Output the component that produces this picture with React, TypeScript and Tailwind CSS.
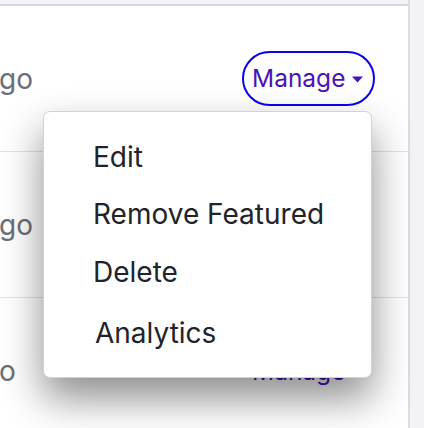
import { useState } from "react";

function Caret() {
  return (
    <svg width="11" height="7" viewBox="0 0 11 7" className="ml-[9px] mt-[1px] shrink-0">
      <path d="M0 0.5 L11 0.5 L5.5 6.5 Z" fill="currentColor" />
    </svg>
  );
}

function Row({ label, outlined, last }: { label: string; outlined?: boolean; last?: boolean }) {
  return (
    <div
      className={`flex h-[146px] items-center justify-between ${last ? "" : "border-b border-[#e1e1e6]"}`}
    >
      <span className="-ml-[1px] text-[28px] text-[#6b6e78]">{label}</span>
      <button
        className={`mr-[33px] flex h-[55px] items-center rounded-full pl-[8px] pr-[10px] text-[24.5px] text-[#4a13b9] ${
          outlined ? "border-2 border-[#0a00f0]" : "border-2 border-transparent"
        }`}
      >
        <span className="w-[91px] whitespace-nowrap text-left">Manage</span>
        <Caret />
      </button>
    </div>
  );
}

export default function App() {
  const [open] = useState(true);
  const items = [
    { label: "Edit", h: "h-[57px]" },
    { label: "Remove Featured", h: "h-[58px]" },
    { label: "Delete", h: "h-[61px]" },
    { label: "Analytics", h: "h-[30px] pl-[2px]" },
  ];

  return (
    <div
      className="flex h-[428px] w-[424px] overflow-hidden bg-[#f3f3f6]"
      style={{ fontFamily: "Inter, 'Noto Sans', sans-serif" }}
    >
      <div className="relative w-[410px] shrink-0 border-r-2 border-[#dcdce2] bg-white">
        <div className="h-[4px] border-b-2 border-[#d6d6de] bg-[#f4f4f8] box-content" />
        <div>
          <Row label="go" outlined />
          <Row label="go" />
          <Row label="o" last />
        </div>

        {open && (
          <div className="absolute left-[43px] top-[111px] h-[267px] w-[329px] rounded-[7px] border border-[#d2d2d6] bg-white pl-[49px] pt-[30px] text-[28px] leading-[30px] text-[#212329] shadow-[0_20px_40px_rgba(0,0,0,0.45)]">
            {items.map((item) => (
              <div key={item.label} className={item.h}>
                {item.label}
              </div>
            ))}
          </div>
        )}
      </div>
    </div>
  );
}
